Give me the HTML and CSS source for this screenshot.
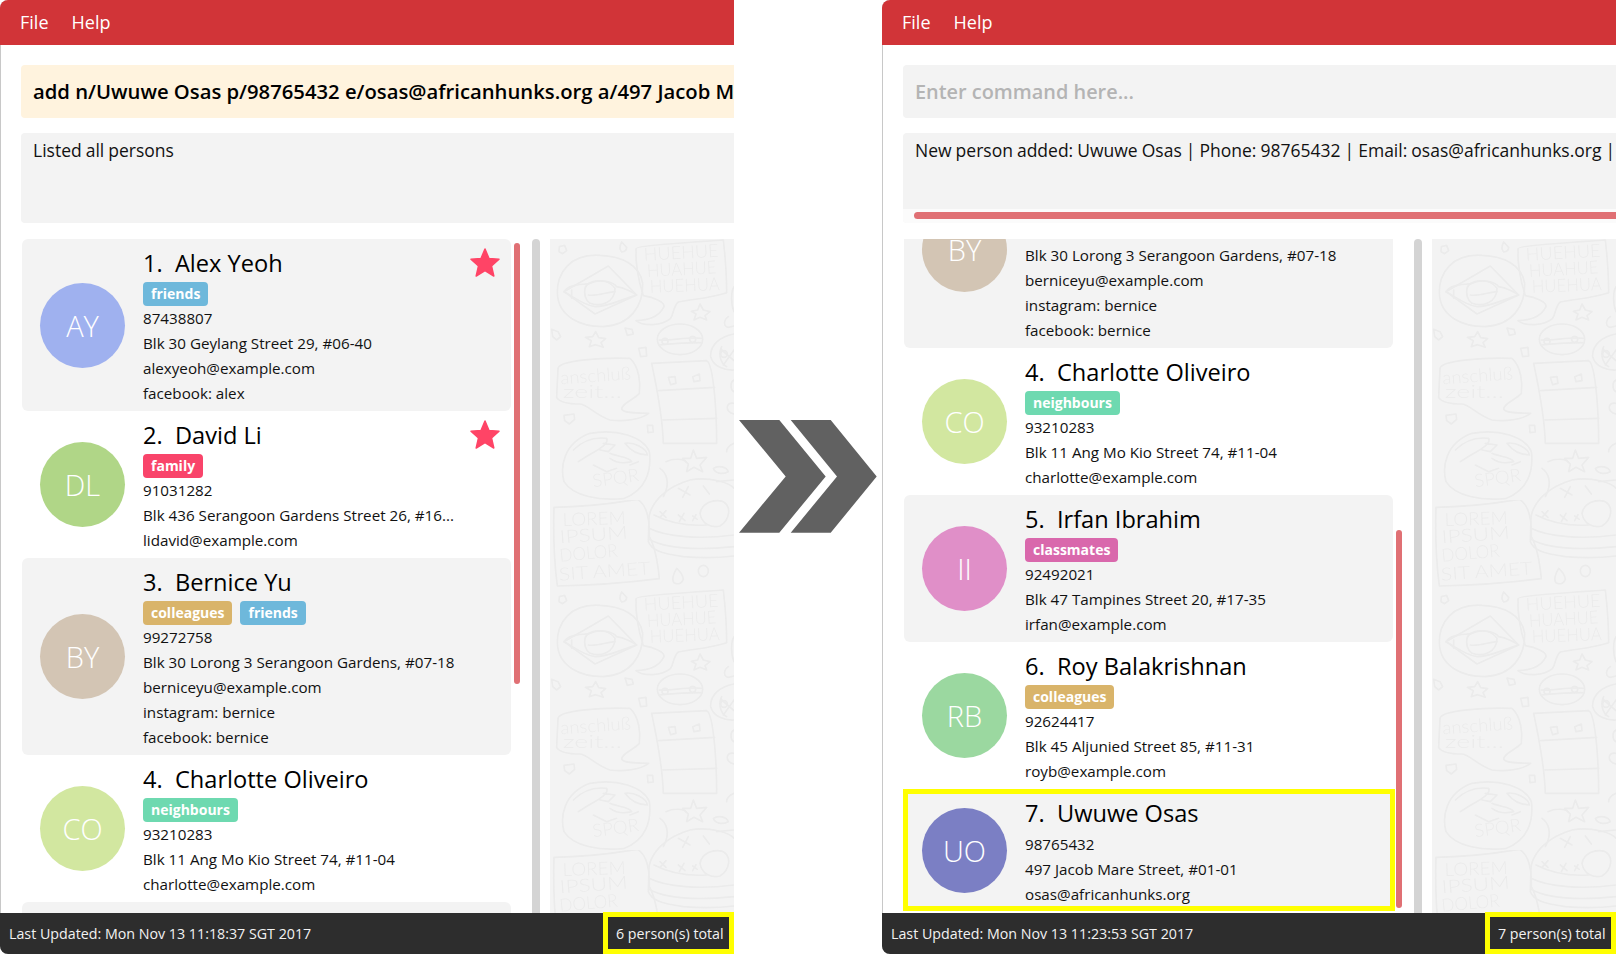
FILE: index.html
```html
<!DOCTYPE html>
<html lang="en">
<head>
<meta charset="utf-8">
<title>AddressBook</title>
<link rel="stylesheet" href="styles.css">
</head>
<body>
<section class="window">
  <nav class="menu"><span class="menu-item">File</span><span class="menu-item">Help</span></nav>
  <main class="main">
    <div class="cmd cmd-typed">add n/Uwuwe Osas p/98765432 e/osas@africanhunks.org a/497 Jacob Mare Street, #01-01</div>
    <div class="result"><div class="result-text">Listed all persons</div></div>
    <div class="panes">
      <div class="list">
        <article class="card odd">
          <div class="avatar c-ay">AY</div>
          <div class="info">
            <div class="name">1.&nbsp; Alex Yeoh</div>
            <div class="tags"><span class="tag t-friends">friends</span></div>
            <div class="row">87438807</div>
            <div class="row">Blk 30 Geylang Street 29, #06-40</div>
            <div class="row">alexyeoh@example.com</div>
            <div class="row">facebook: alex</div>
          </div>
          <svg class="star" viewBox="0 0 32 31"><path d="M16 2 L20 11.5 L30 12.3 L22.5 19 L24.8 29 L16 23.7 L7.2 29 L9.5 19 L2 12.3 L12 11.5 Z"/></svg>
        </article>
        <article class="card">
          <div class="avatar c-dl">DL</div>
          <div class="info">
            <div class="name">2.&nbsp; David Li</div>
            <div class="tags"><span class="tag t-family">family</span></div>
            <div class="row">91031282</div>
            <div class="row">Blk 436 Serangoon Gardens Street 26, #16...</div>
            <div class="row">lidavid@example.com</div>
          </div>
          <svg class="star" viewBox="0 0 32 31"><path d="M16 2 L20 11.5 L30 12.3 L22.5 19 L24.8 29 L16 23.7 L7.2 29 L9.5 19 L2 12.3 L12 11.5 Z"/></svg>
        </article>
        <article class="card odd">
          <div class="avatar c-by">BY</div>
          <div class="info">
            <div class="name">3.&nbsp; Bernice Yu</div>
            <div class="tags"><span class="tag t-colleagues">colleagues</span><span class="tag t-friends">friends</span></div>
            <div class="row">99272758</div>
            <div class="row">Blk 30 Lorong 3 Serangoon Gardens, #07-18</div>
            <div class="row">berniceyu@example.com</div>
            <div class="row">instagram: bernice</div>
            <div class="row">facebook: bernice</div>
          </div>
        </article>
        <article class="card">
          <div class="avatar c-co">CO</div>
          <div class="info">
            <div class="name">4.&nbsp; Charlotte Oliveiro</div>
            <div class="tags"><span class="tag t-neighbours">neighbours</span></div>
            <div class="row">93210283</div>
            <div class="row">Blk 11 Ang Mo Kio Street 74, #11-04</div>
            <div class="row">charlotte@example.com</div>
          </div>
        </article>
        <article class="card odd"></article>
      </div>
      <div class="track"><div class="thumb thumb-left"></div></div>
      <div class="gutter"></div>
      <div class="browser">
        <svg class="doodles" viewBox="0 0 184 674" aria-hidden="true">
          <defs>
            <g id="burger">
              <path d="M297 50 C305 5 350 -40 420 -60 C480 -72 540 -50 552 -35"/>
              <path d="M297 50 L295 125 C305 150 330 160 400 170 C470 176 520 172 552 168"/>
              <path d="M297 85 C350 112 450 118 552 105"/>
              <path d="M297 118 C350 148 450 150 552 140"/>
              <path d="M312 45 C360 70 420 78 470 75"/>
              <path d="M450 40 C455 10 490 -5 520 5 C545 20 540 60 510 78 C480 85 455 70 450 40 Z"/>
              <path d="M330 35 L348 52 M348 32 L330 52 M385 45 L405 62 M402 40 L388 65 M428 48 L442 58 M438 44 L428 62"/>
              <path d="M385 -35 L420 -15 M415 -40 L398 -8 M460 -42 L478 -18"/>
            </g>
            <pattern id="tile" width="552" height="1050" patternUnits="userSpaceOnUse" patternTransform="translate(0 -89) scale(0.33333)">
              <g class="ink">
                <path d="M12 22 Q130 20 262 -2 M262 -2 Q300 20 298 110 Q320 150 328 236 Q180 255 22 258 Q8 150 12 22"/>
                <use href="#burger"/>
                <use href="#burger" y="1050"/>
                <path d="M380 205 Q362 235 372 248 Q392 258 400 238 Q398 220 380 205 Z"/>
                <ellipse cx="460" cy="213" rx="15" ry="17"/>
                <path d="M28 290 L44 286 L50 302 L38 311 L27 305 Z"/>
                <path d="M215 276 Q205 295 215 306 Q230 305 230 292 Z"/>
                <path d="M150 316 C60 310 20 370 22 430 C25 500 90 530 160 530 C240 525 280 470 278 400 C270 345 215 318 150 316 Z"/>
                <path d="M175 348 L260 435 L135 492 L42 425 Z"/>
                <path d="M42 425 C60 400 100 405 120 400 C150 385 190 395 200 410 C225 415 245 425 260 435 C220 445 180 470 135 470 C100 465 70 440 42 425 Z"/>
                <path d="M105 415 C110 390 170 380 195 415 C195 460 150 470 120 460 C105 450 102 430 105 415 Z"/>
                <path d="M115 435 C140 440 175 425 195 425 M65 420 L65 445"/>
                <path d="M258 296 C258 288 400 278 520 270 C528 340 530 400 530 428 C480 445 420 448 385 456 C370 468 372 490 362 505 C335 528 280 530 258 512 C290 510 325 505 342 470 C345 455 310 442 280 437 C262 380 256 340 258 296 Z"/>
                <path d="M450 462 L460 480 L480 485 L465 497 L470 510 L450 502 L432 510 L438 492 L424 484 L443 480 Z"/>
                <path d="M137 545 L146 563 L167 566 L153 578 L160 592 L137 584 L118 590 L124 572 L106 562 L128 560 Z"/>
                <ellipse cx="390" cy="568" rx="68" ry="46"/>
                <path d="M328 570 C360 572 420 560 455 565 M328 585 C360 582 420 578 452 578"/>
                <circle cx="345" cy="574" r="9"/><circle cx="428" cy="568" r="9"/>
                <path d="M552 552 C510 560 480 585 482 620 C490 650 525 662 552 660"/>
                <path d="M515 590 C505 610 510 640 530 650 M515 600 L552 632 M520 645 L552 600"/>
                <circle cx="522" cy="612" r="10"/>
                <path d="M24 655 C28 630 160 622 240 625 C268 650 272 700 268 730 C250 750 215 760 215 778 C225 792 270 788 296 790 C270 810 220 815 180 810 C135 795 115 765 90 762 C60 762 30 760 20 742 Z"/>
                <path d="M305 640 L470 632 C490 640 500 780 500 880 L340 880 C338 800 322 720 305 640 Z"/>
                <path d="M326 722 L494 712 M338 810 L500 805"/>
                <path d="M355 682 L375 680 L378 700 L362 704 Z"/>
                <path d="M428 680 L448 672 L450 692 L432 695 Z"/>
                <path d="M5 538 L24 545 L32 560 L20 570 L8 560 Z"/>
                <path d="M225 534 L246 538 L250 552 L232 556 Z"/>
                <path d="M266 595 L288 592 L290 618 L272 620 Z"/>
                <path d="M42 796 L72 792 L74 808 L58 822 L44 812 Z"/>
                <path d="M292 826 L308 826 L310 846 L294 848 Z"/>
                <path d="M535 500 C520 510 520 530 535 532 L552 528"/>
                <path d="M552 690 C540 695 540 720 552 725 M552 760 C525 755 525 785 552 792 M552 410 C540 430 545 470 552 485"/>
                <path d="M552 880 C540 885 530 895 530 905"/>
                <path d="M120 850 C200 835 280 860 298 905 C305 960 290 1020 220 1046 C150 1052 70 1040 42 995 C30 950 40 880 120 850 Z"/>
                <path d="M70 900 C100 870 130 860 170 865 C180 885 130 905 85 935 M160 880 L195 885 L175 905 L150 900 M225 880 C250 875 290 895 292 915 C265 915 240 900 225 880 M180 910 C200 920 240 920 245 935 C225 940 200 940 180 925 M130 945 L170 965 L200 955 M240 945 L265 935"/>
                <path d="M330 955 C345 965 365 995 340 1040"/>
                <path d="M348 935 C370 925 400 925 410 938"/>
                <path d="M430 900 L440 925 L470 922 L450 945 L458 965 L432 952 L410 965 L415 942 L398 925 L422 925 Z"/>
                <path d="M490 955 C505 945 530 950 535 965 C515 975 495 970 490 955 Z"/>
                <path d="M552 990 L500 995"/>
              </g>
              <g class="ink-text">
                <text class="hand" x="38" y="78" textLength="190" lengthAdjust="spacingAndGlyphs" transform="rotate(-2 38 78)">LOREM</text>
                <text class="hand" x="30" y="130" textLength="205" lengthAdjust="spacingAndGlyphs" transform="rotate(-4 30 130)">IPSUM</text>
                <text class="hand" x="30" y="185" textLength="175" lengthAdjust="spacingAndGlyphs" transform="rotate(-5 30 185)">DOLOR</text>
                <text class="hand" x="28" y="242" textLength="275" lengthAdjust="spacingAndGlyphs" transform="rotate(-4 28 242)">SIT AMET</text>
                <text class="hand" x="282" y="332" textLength="225" lengthAdjust="spacingAndGlyphs" transform="rotate(-3 282 332)">HUEHUE</text>
                <text class="hand" x="292" y="381" textLength="208" lengthAdjust="spacingAndGlyphs" transform="rotate(-3 292 381)">HUAHUE</text>
                <text class="hand" x="300" y="428" textLength="210" lengthAdjust="spacingAndGlyphs" transform="rotate(-2 300 428)">HUEHUA</text>
                <text class="hand" x="32" y="703" textLength="212" lengthAdjust="spacingAndGlyphs" transform="rotate(-4 32 703)">anschluß</text>
                <text class="hand" x="38" y="745" textLength="178" lengthAdjust="spacingAndGlyphs">zeit...</text>
                <text class="hand" x="130" y="1012" textLength="140" lengthAdjust="spacingAndGlyphs" transform="rotate(-8 130 1012)">SPQR</text>
              </g>
            </pattern>
          </defs>
          <rect width="184" height="674" fill="url(#tile)"/>
        </svg>
      </div>
    </div>
  </main>
  <footer class="status">
    <span class="updated">Last Updated: Mon Nov 13 11:18:37 SGT 2017</span>
    <span class="total">6 person(s) total</span>
  </footer>
</section>

<div class="divider">
  <svg class="chevrons" viewBox="0 0 138 113" aria-hidden="true">
    <path d="M0 0 H40.3 L86.7 56.4 L40.3 112.8 H0 L46.7 56.4 Z"/>
    <path d="M51.7 0 H91.7 L137.7 56.4 L91.7 112.8 H51.7 L98 56.4 Z"/>
  </svg>
</div>

<section class="window">
  <nav class="menu"><span class="menu-item">File</span><span class="menu-item">Help</span></nav>
  <main class="main">
    <div class="cmd cmd-empty">Enter command here...</div>
    <div class="result">
      <div class="result-text">New person added: Uwuwe Osas | Phone: 98765432 | Email: osas@africanhunks.org | Address: 497 Jacob Mare Street, #01-01</div>
      <div class="hbar"><div class="hthumb"></div></div>
    </div>
    <div class="panes">
      <div class="list">
        <div class="list-scrolled">
          <article class="card odd">
            <div class="avatar c-by">BY</div>
            <div class="info">
              <div class="name">3.&nbsp; Bernice Yu</div>
              <div class="tags"><span class="tag t-colleagues">colleagues</span><span class="tag t-friends">friends</span></div>
              <div class="row">99272758</div>
              <div class="row">Blk 30 Lorong 3 Serangoon Gardens, #07-18</div>
              <div class="row">berniceyu@example.com</div>
              <div class="row">instagram: bernice</div>
              <div class="row">facebook: bernice</div>
            </div>
          </article>
          <article class="card">
            <div class="avatar c-co">CO</div>
            <div class="info">
              <div class="name">4.&nbsp; Charlotte Oliveiro</div>
              <div class="tags"><span class="tag t-neighbours">neighbours</span></div>
              <div class="row">93210283</div>
              <div class="row">Blk 11 Ang Mo Kio Street 74, #11-04</div>
              <div class="row">charlotte@example.com</div>
            </div>
          </article>
          <article class="card odd">
            <div class="avatar c-ii">II</div>
            <div class="info">
              <div class="name">5.&nbsp; Irfan Ibrahim</div>
              <div class="tags"><span class="tag t-classmates">classmates</span></div>
              <div class="row">92492021</div>
              <div class="row">Blk 47 Tampines Street 20, #17-35</div>
              <div class="row">irfan@example.com</div>
            </div>
          </article>
          <article class="card">
            <div class="avatar c-rb">RB</div>
            <div class="info">
              <div class="name">6.&nbsp; Roy Balakrishnan</div>
              <div class="tags"><span class="tag t-colleagues">colleagues</span></div>
              <div class="row">92624417</div>
              <div class="row">Blk 45 Aljunied Street 85, #11-31</div>
              <div class="row">royb@example.com</div>
            </div>
          </article>
          <article class="card odd card-new">
            <div class="avatar c-uo">UO</div>
            <div class="info">
              <div class="name">7.&nbsp; Uwuwe Osas</div>
              <div class="row">98765432</div>
              <div class="row">497 Jacob Mare Street, #01-01</div>
              <div class="row">osas@africanhunks.org</div>
            </div>
          </article>
        </div>
      </div>
      <div class="track"><div class="thumb thumb-right"></div></div>
      <div class="gutter"></div>
      <div class="browser">
        <svg class="doodles" viewBox="0 0 184 674" aria-hidden="true">
          <rect width="184" height="674" fill="url(#tile)"/>
        </svg>
      </div>
    </div>
  </main>
  <footer class="status">
    <span class="updated">Last Updated: Mon Nov 13 11:23:53 SGT 2017</span>
    <span class="total">7 person(s) total</span>
  </footer>
</section>
</body>
</html>
```

FILE: styles.css
```css
* { box-sizing: border-box; }

html, body { margin: 0; padding: 0; }

body {
  display: flex;
  width: 1616px;
  height: 954px;
  overflow: hidden;
  background: #fff;
  color: #111;
  font-family: "Open Sans", "Noto Sans", sans-serif;
}

.window {
  display: flex;
  flex-direction: column;
  flex: none;
  width: 734px;
  height: 954px;
  overflow: hidden;
  border-radius: 8px 0 0 8px;
  background: #fff;
  box-shadow: inset 1px 0 0 #c8c8c8;
}

.divider {
  display: flex;
  flex: none;
  width: 148px;
  padding: 420px 0 0 5px;
}

.chevrons { width: 138px; height: 113px; }
.chevrons path { fill: #616161; }

.menu {
  display: flex;
  flex: none;
  align-items: center;
  gap: 23px;
  height: 45px;
  padding: 0 0 2px 20px;
  background: #d13438;
  color: #fff;
  font-size: 18px;
}

.main {
  display: flex;
  flex-direction: column;
  flex: 1;
  min-height: 0;
  padding: 20px 0 0 21px;
}

.cmd {
  flex: none;
  height: 53px;
  padding: 0 12px;
  overflow: hidden;
  border-radius: 4px 0 0 4px;
  font-size: 20.25px;
  font-weight: 600;
  line-height: 53px;
  white-space: nowrap;
}

.cmd-typed { background: #fff3de; color: #000; }
.cmd-empty { background: #f3f3f3; color: #b4b4b4; font-size: 19.9px; }

.result {
  display: flex;
  flex-direction: column;
  flex: none;
  height: 90px;
  margin-top: 15px;
  overflow: hidden;
  border-radius: 4px 0 0 4px;
  background: #f3f3f3;
  font-size: 17.5px;
  word-spacing: -0.5px;
}

.result-text {
  flex: 1;
  padding: 4px 12px 0;
  line-height: 26px;
  white-space: nowrap;
}

.hbar {
  flex: none;
  height: 14px;
  padding: 3px 0 4px 11px;
  background: #fbfbfb;
}

.hthumb {
  height: 7px;
  border-radius: 4px 0 0 4px;
  background: #e07074;
}

.panes {
  display: flex;
  flex: 1;
  min-height: 0;
  margin-top: 16px;
}

.list {
  flex: none;
  width: 493px;
  height: 100%;
  padding: 0 3px 0 1px;
  overflow: hidden;
}

.list-scrolled { margin-top: -88px; }

.card {
  position: relative;
  display: flex;
  width: 489px;
  padding-left: 18px;
  border-radius: 6px;
}

.card.odd { background: #f3f3f3; }

.card-new::after {
  content: "";
  position: absolute;
  inset: 0 -2px 0 -1px;
  border: 5px solid #ff0;
}

.card-new .info { padding-bottom: 4px; }

.list > .card.odd:last-child { height: 40px; }

.avatar {
  display: flex;
  flex: none;
  align-items: center;
  align-self: center;
  justify-content: center;
  width: 85px;
  height: 85px;
  border-radius: 50%;
  color: #fff;
  font-size: 29px;
  font-weight: 300;
}

.c-ay { background: #9fb1ef; }
.c-dl { background: #b0d687; }
.c-by { background: #d3c5b4; }
.c-co { background: #d2e7a0; }
.c-ii { background: #e08fc8; }
.c-rb { background: #9bd8a0; }
.c-uo { background: #7b7fc4; }

.info {
  flex: 1;
  min-width: 0;
  padding: 8px 0 5px 18px;
}

.name {
  height: 32px;
  color: #000;
  font-size: 23.6px;
  line-height: 32px;
  white-space: nowrap;
}

.tags {
  display: flex;
  gap: 8px;
  height: 24px;
  margin-top: 3px;
}

.card-new .name { margin-bottom: 3px; }

.tag {
  height: 24px;
  padding: 0 8px;
  border-radius: 4px;
  color: #fff;
  font-size: 14px;
  font-weight: 700;
  line-height: 23px;
}

.t-friends { background: #6eb8db; }
.t-family { background: #f9446a; }
.t-colleagues { background: #d9b46a; }
.t-neighbours { background: #6ed9b0; }
.t-classmates { background: #d968ac; }

.row {
  height: 25px;
  font-size: 15.2px;
  line-height: 25px;
  white-space: nowrap;
}

.star {
  position: absolute;
  top: 8px;
  right: 10px;
  width: 32px;
  height: 31px;
}

.star path {
  fill: #ff4466;
  stroke: #ff4466;
  stroke-width: 1.5;
  stroke-linejoin: round;
}

.track { flex: none; width: 6px; }

.thumb { border-radius: 3px; background: #e07074; }
.thumb-left { height: 441px; margin-top: 4px; }
.thumb-right { height: 378px; margin-top: 291px; }

.gutter {
  flex: none;
  width: 8px;
  margin-left: 12px;
  border-radius: 4px 4px 0 0;
  background: #d4d4d4;
}

.browser {
  flex: none;
  width: 184px;
  margin-left: 10px;
  background: #f3f3f3;
}

.doodles { display: block; width: 184px; height: 674px; }

.ink path, .ink circle, .ink ellipse,
#burger path {
  fill: none;
  stroke: #ebebeb;
  stroke-width: 5;
  stroke-linejoin: round;
  stroke-linecap: round;
}

.hand {
  fill: #ebebeb;
  font-family: "Lato", sans-serif;
  font-size: 54px;
  font-weight: 300;
}

.status {
  display: flex;
  flex: none;
  align-items: center;
  justify-content: space-between;
  height: 41px;
  padding-left: 9px;
  background: #2d2d2d;
  color: #f2f2f2;
  font-size: 14.25px;
}

.total {
  display: flex;
  align-items: center;
  height: 42px;
  width: 131px;
  margin-top: -1px;
  padding-left: 8px;
  border: 5px solid #ff0;
  white-space: nowrap;
}
```
